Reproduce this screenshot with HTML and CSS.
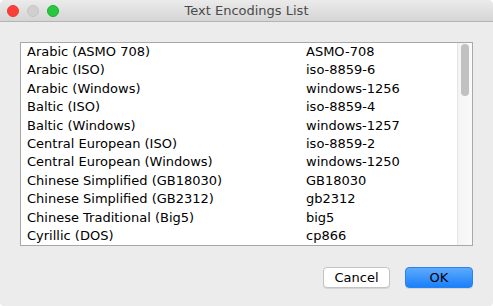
FILE: index.html
```html
<!DOCTYPE html>
<html lang="en">
<head>
    <meta charset="UTF-8">
    <title>Text Encodings List</title>
    <link rel="stylesheet" href="styles.css">
</head>
<body>
    <div class="window">
        <div class="titlebar">
            <div class="lights">
                <span class="light red"></span>
                <span class="light gray"></span>
                <span class="light green"></span>
            </div>
            <div class="title">Text Encodings List</div>
            <div></div>
        </div>

        <div class="content">
            <div class="list">
                <div class="rows">
                    <div class="row"><span class="name">Arabic (ASMO 708)</span><span class="code">ASMO-708</span></div>
                    <div class="row"><span class="name">Arabic (ISO)</span><span class="code">iso-8859-6</span></div>
                    <div class="row"><span class="name">Arabic (Windows)</span><span class="code">windows-1256</span></div>
                    <div class="row"><span class="name">Baltic (ISO)</span><span class="code">iso-8859-4</span></div>
                    <div class="row"><span class="name">Baltic (Windows)</span><span class="code">windows-1257</span></div>
                    <div class="row"><span class="name">Central European (ISO)</span><span class="code">iso-8859-2</span></div>
                    <div class="row"><span class="name">Central European (Windows)</span><span class="code">windows-1250</span></div>
                    <div class="row"><span class="name">Chinese Simplified (GB18030)</span><span class="code">GB18030</span></div>
                    <div class="row"><span class="name">Chinese Simplified (GB2312)</span><span class="code">gb2312</span></div>
                    <div class="row"><span class="name">Chinese Traditional (Big5)</span><span class="code">big5</span></div>
                    <div class="row"><span class="name">Cyrillic (DOS)</span><span class="code">cp866</span></div>
                    <div class="row"><span class="name">Cyrillic (ISO)</span><span class="code">iso-8859-5</span></div>
                </div>
                <div class="scrollbar">
                    <div class="thumb"></div>
                </div>
            </div>

            <div class="buttons">
                <button class="btn">Cancel</button>
                <button class="btn default">OK</button>
            </div>
        </div>
    </div>
</body>
</html>
```

FILE: styles.css
```css
*{
    box-sizing: border-box;
    font-family: "DejaVu Sans", sans-serif;
}

body{
    margin: 0;
    background-color: #ffffff;
}

.window{
    width: 493px;
    height: 306px;
    background-color: #ececec;
    border-radius: 5px 5px 4px 4px;
    overflow: hidden;
}

.titlebar{
    display: grid;
    grid-template-columns: 1fr auto 1fr;
    align-items: center;
    height: 22px;
    background: linear-gradient(#ebebeb, #d5d5d5);
    border-bottom: 1px solid #b4b4b4;
}

.lights{
    display: flex;
    gap: 8px;
    padding-left: 7px;
}

.light{
    width: 12px;
    height: 12px;
    border-radius: 50%;
}

.red{
    background-color: #fc3d39;
    border: 1px solid #e33e32;
}

.gray{
    background-color: #d0d0d0;
    border: 1px solid #c4c4c4;
}

.green{
    background-color: #28c840;
    border: 1px solid #1dad2b;
}

.title{
    font-size: 13px;
    color: #4a4a4a;
}

.content{
    padding: 20px 20px 0 20px;
}

.list{
    display: flex;
    height: 204px;
    background-color: #ffffff;
    border: 1px solid #a8a8a8;
    overflow: hidden;
}

.rows{
    flex: 1;
    padding-left: 6px;
    overflow: hidden;
}

.row{
    display: flex;
    height: 18.4px;
    line-height: 18.4px;
    font-size: 13px;
    color: #000000;
    white-space: nowrap;
}

.name{
    width: 279px;
}

.scrollbar{
    width: 15px;
    padding: 1px 3px 0 3px;
    background: linear-gradient(to right, #f4f4f4, #fafafa);
    border-left: 1px solid #e6e6e6;
}

.thumb{
    width: 8px;
    height: 52px;
    border-radius: 4px;
    background-color: #c1c1c1;
}

.buttons{
    display: flex;
    justify-content: flex-end;
    gap: 15px;
    padding-top: 21px;
}

.btn{
    width: 67px;
    height: 21px;
    padding: 0;
    font-size: 13px;
    color: #000000;
    background-color: #ffffff;
    border: 1px solid #c3c3c3;
    border-radius: 4px;
    box-shadow: 0 1px 0 #d6d6d6;
}

.default{
    width: 68px;
    background: linear-gradient(#5eaafd, #1a80fb);
    border: 1px solid #2a82f0;
}
```
